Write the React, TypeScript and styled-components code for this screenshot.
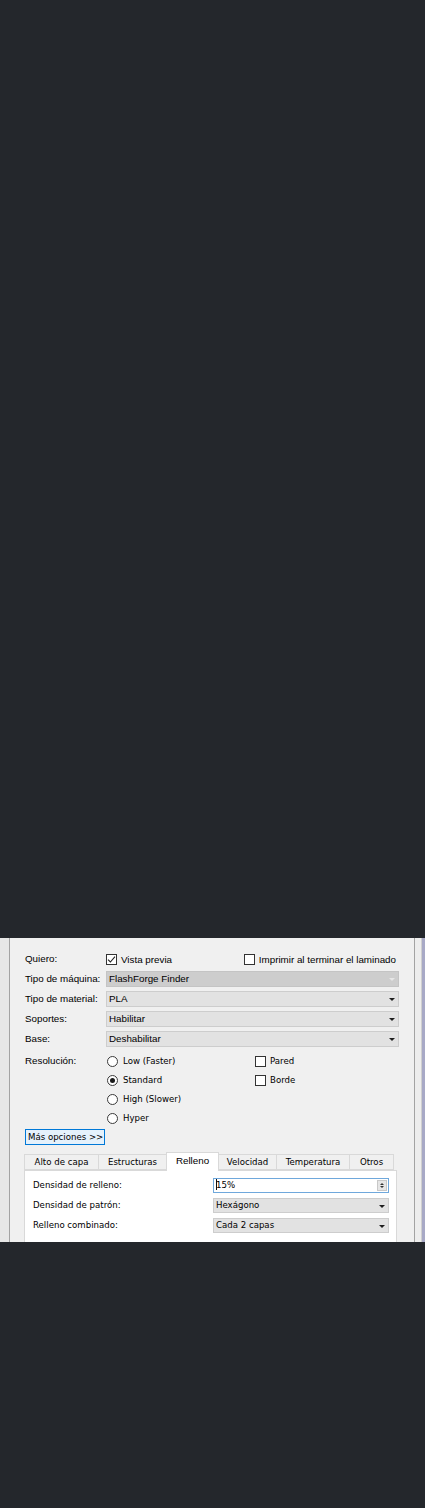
import React from "react";
import styled, { createGlobalStyle, css } from "styled-components";

const GlobalStyle = createGlobalStyle`
  html, body { margin: 0; padding: 0; background: #24272c; }
  * { box-sizing: border-box; }
`;

const segoe = css`
  font-family: "Liberation Sans", Arial, sans-serif;
  font-size: 9.8px;
  color: #000;
`;
const tahoma = css`
  font-family: "DejaVu Sans", Verdana, sans-serif;
  font-size: 8.6px;
  color: #000;
`;

const Page = styled.div`
  width: 425px;
  height: 1508px;
  background: #24272c;
  padding-top: 938px;
`;

const Panel = styled.div`
  display: flex;
  height: 304px;
  overflow: hidden;
  background: #f0f0f0;
`;

const LeftStrip = styled.div`
  width: 10px;
  background: #e7e7e7;
  border-right: 1px solid #a3a3a3;
`;

const RightStrip = styled.div`
  width: 8px;
  background: #ededed;
  border-left: 1px solid #a3a3a3;
  border-right: 1px solid #cfcfcf;
`;

const Lavender = styled.div`
  width: 3px;
  background: #a8a9c6;
`;

const Content = styled.div`
  flex: 1;
  display: flex;
  flex-direction: column;
  padding: 13px 15px 0 15px;
`;

const FormGrid = styled.div`
  display: grid;
  grid-template-columns: 81px 1fr;
  row-gap: 4px;
  align-items: center;
`;

const Label = styled.div`
  ${segoe};
  height: 16px;
  line-height: 16px;
  white-space: nowrap;
`;

const TopRow = styled.div`
  display: flex;
  justify-content: space-between;
  align-items: center;
  height: 16px;
  padding-right: 3px;
`;

const CheckItem = styled.label<{ $font?: "segoe" | "tahoma" }>`
  display: flex;
  align-items: center;
  gap: 4px;
  height: 14px;
  white-space: nowrap;
  ${(p) => (p.$font === "tahoma" ? tahoma : segoe)};
`;

const Box = styled.span`
  width: 11px;
  height: 11px;
  border: 1px solid #333;
  background: #fff;
  display: inline-flex;
  align-items: center;
  justify-content: center;
`;

const Combo = styled.div<{ $disabled?: boolean; $font?: "segoe" | "tahoma"; $h?: number }>`
  position: relative;
  height: ${(p) => p.$h ?? 16}px;
  line-height: ${(p) => (p.$h ?? 16) - 2}px;
  border: 1px solid ${(p) => (p.$disabled ? "#c4c4c4" : "#cdcdcd")};
  background: ${(p) => (p.$disabled ? "#cdcdcd" : "#e2e2e2")};
  padding-left: 2px;
  ${(p) => (p.$font === "tahoma" ? tahoma : segoe)};
  white-space: nowrap;
`;

const Arrow = styled.span<{ $disabled?: boolean }>`
  position: absolute;
  right: 3px;
  top: 50%;
  margin-top: -1px;
  width: 0;
  height: 0;
  border-left: 3px solid transparent;
  border-right: 3px solid transparent;
  border-top: 3px solid ${(p) => (p.$disabled ? "#e6e6e6" : "#1e1e1e")};
`;

const ResGrid = styled.div`
  display: grid;
  grid-template-columns: 81px 149px 1fr;
  grid-auto-rows: 14px;
  row-gap: 5px;
  margin-top: 7px;
  align-items: center;
`;

const ResLabel = styled.div`
  ${segoe};
  line-height: 14px;
  white-space: nowrap;
`;

const RadioItem = styled.label`
  display: flex;
  align-items: center;
  gap: 5px;
  ${tahoma};
  white-space: nowrap;
  padding-left: 1px;
`;

const RadioCircle = styled.span<{ $on?: boolean }>`
  width: 11px;
  height: 11px;
  border-radius: 50%;
  border: 1px solid #3a3a3a;
  background: #fff;
  display: inline-flex;
  align-items: center;
  justify-content: center;
  &::after {
    content: "";
    width: 5px;
    height: 5px;
    border-radius: 50%;
    background: ${(p) => (p.$on ? "#1a1a1a" : "transparent")};
  }
`;

const MoreButton = styled.button`
  margin-top: 4px;
  align-self: flex-start;
  width: 80px;
  height: 16px;
  padding: 0 0 0 2px;
  text-align: left;
  background: #e5f1fb;
  border: 1px solid #0078d7;
  ${tahoma};
  line-height: 14px;
`;

const Tabs = styled.div`
  margin: 7px 2px 0 -1px;
  display: flex;
  flex-direction: column;
`;

const TabBar = styled.div`
  display: flex;
  align-items: flex-end;
  height: 18px;
  position: relative;
  z-index: 1;
`;

const Tab = styled.div<{ $w: number; $active?: boolean }>`
  width: ${(p) => p.$w}px;
  height: ${(p) => (p.$active ? 19 : 16)}px;
  margin-bottom: ${(p) => (p.$active ? -1 : 0)}px;
  border: 1px solid #d9d9d9;
  border-bottom: ${(p) => (p.$active ? "none" : "1px solid #d9d9d9")};
  margin-left: -1px;
  background: ${(p) => (p.$active ? "#ffffff" : "#f0f0f0")};
  text-align: center;
  line-height: ${(p) => (p.$active ? 15 : 14)}px;
  white-space: nowrap;
  ${(p) => (p.$active ? segoe : tahoma)};
  &:first-child { margin-left: 0; }
`;

const TabPane = styled.div`
  background: #ffffff;
  border: 1px solid #d9d9d9;
  height: 90px;
  padding: 7px 7px 0 8px;
  display: grid;
  grid-template-columns: 180px 1fr;
  grid-auto-rows: 15px;
  row-gap: 5px;
  align-items: center;
`;

const PaneLabel = styled.div`
  ${tahoma};
  white-space: nowrap;
  line-height: 15px;
`;

const SpinBox = styled.div`
  position: relative;
  height: 15px;
  border: 1px solid #6fa8dc;
  background: #fff;
  ${tahoma};
  line-height: 13px;
  padding-left: 2px;
`;

const Caret = styled.span`
  display: inline-block;
  width: 1px;
  height: 11px;
  background: #111;
  vertical-align: -2px;
  margin-right: -1px;
`;

const SpinButtons = styled.div`
  position: absolute;
  right: 1px;
  top: 1px;
  bottom: 1px;
  width: 10px;
  border: 1px solid #c8c8c8;
  background: #e6e6e6;
  display: flex;
  flex-direction: column;
  align-items: center;
  justify-content: center;
  gap: 1px;
`;

const SpinTri = styled.span<{ $up?: boolean }>`
  width: 0;
  height: 0;
  border-left: 2.5px solid transparent;
  border-right: 2.5px solid transparent;
  ${(p) =>
    p.$up ? "border-bottom: 2.5px solid #333;" : "border-top: 2.5px solid #333;"}
`;

const CheckMark = () => (
  <svg width="9" height="9" viewBox="0 0 9 9">
    <path d="M1 4.6 L3.4 7 L8 1.6" fill="none" stroke="#222" strokeWidth="1.1" />
  </svg>
);

export default function App() {
  return (
    <>
      <GlobalStyle />
      <Page>
        <Panel>
          <LeftStrip />
          <Content>
            <FormGrid>
              <Label>Quiero:</Label>
              <TopRow>
                <CheckItem>
                  <Box>
                    <CheckMark />
                  </Box>
                  Vista previa
                </CheckItem>
                <CheckItem>
                  <Box />
                  Imprimir al terminar el laminado
                </CheckItem>
              </TopRow>

              <Label>Tipo de máquina:</Label>
              <Combo $disabled>
                FlashForge Finder
                <Arrow $disabled />
              </Combo>

              <Label>Tipo de material:</Label>
              <Combo>
                PLA
                <Arrow />
              </Combo>

              <Label>Soportes:</Label>
              <Combo>
                Habilitar
                <Arrow />
              </Combo>

              <Label>Base:</Label>
              <Combo>
                Deshabilitar
                <Arrow />
              </Combo>
            </FormGrid>

            <ResGrid>
              <ResLabel>Resolución:</ResLabel>
              <RadioItem>
                <RadioCircle />
                Low (Faster)
              </RadioItem>
              <CheckItem $font="tahoma">
                <Box />
                Pared
              </CheckItem>

              <span />
              <RadioItem>
                <RadioCircle $on />
                Standard
              </RadioItem>
              <CheckItem $font="tahoma">
                <Box />
                Borde
              </CheckItem>

              <span />
              <RadioItem>
                <RadioCircle />
                High (Slower)
              </RadioItem>
              <span />

              <span />
              <RadioItem>
                <RadioCircle />
                Hyper
              </RadioItem>
              <span />
            </ResGrid>

            <MoreButton>Más opciones &gt;&gt;</MoreButton>

            <Tabs>
              <TabBar>
                <Tab $w={75}>Alto de capa</Tab>
                <Tab $w={69}>Estructuras</Tab>
                <Tab $w={53} $active>
                  Relleno
                </Tab>
                <Tab $w={59}>Velocidad</Tab>
                <Tab $w={74}>Temperatura</Tab>
                <Tab $w={45}>Otros</Tab>
              </TabBar>
              <TabPane>
                <PaneLabel>Densidad de relleno:</PaneLabel>
                <SpinBox>
                  <Caret />
                  15%
                  <SpinButtons>
                    <SpinTri $up />
                    <SpinTri />
                  </SpinButtons>
                </SpinBox>

                <PaneLabel>Densidad de patrón:</PaneLabel>
                <Combo $font="tahoma" $h={15}>
                  Hexágono
                  <Arrow />
                </Combo>

                <PaneLabel>Relleno combinado:</PaneLabel>
                <Combo $font="tahoma" $h={15}>
                  Cada 2 capas
                  <Arrow />
                </Combo>
              </TabPane>
            </Tabs>
          </Content>
          <RightStrip />
          <Lavender />
        </Panel>
      </Page>
    </>
  );
}
